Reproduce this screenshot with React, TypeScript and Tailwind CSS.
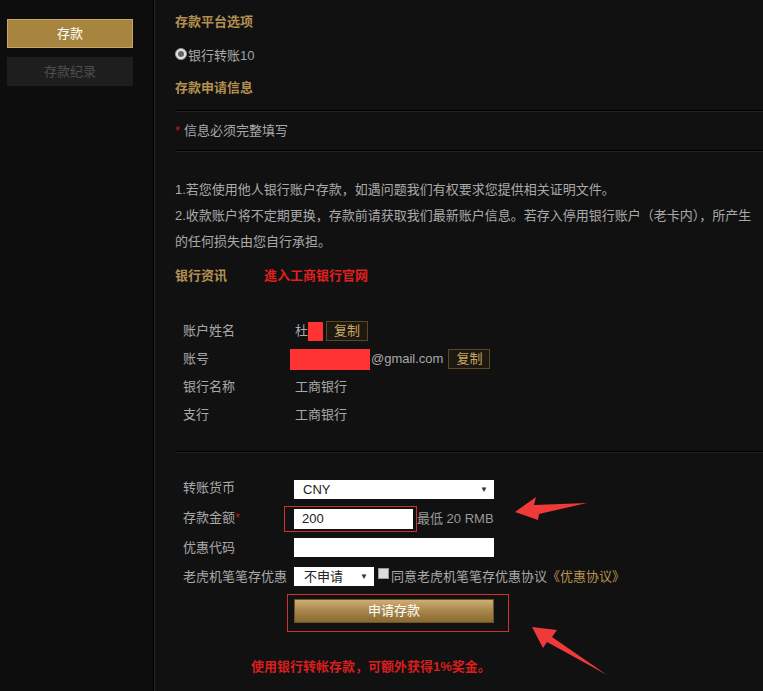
import React from "react";

function Divider() {
  return <div className="h-[2px] border-t border-black border-b border-b-[#232323]" />;
}

function CopyButton() {
  return (
    <span className="ml-[3px] inline-flex h-[20px] w-[42px] items-center justify-center border border-[#5a4828] bg-[#1e1910] text-[13px] text-[#c9a665]">
      复制
    </span>
  );
}

function Redacted({ w, h }: { w: number; h: number }) {
  return <span className="inline-block bg-[#ff3333]" style={{ width: w, height: h }} />;
}

function FakeSelect({ value, width, textPad }: { value: string; width: string; textPad: string }) {
  return (
    <div className={`flex h-[19px] items-center justify-between bg-white pr-[6px] text-[13px] text-[#222] ${width} ${textPad}`}>
      <span>{value}</span>
      <span className="text-[8px] text-[#333]">▼</span>
    </div>
  );
}

export default function App() {
  const bankRows = [
    { label: "账户姓名", value: <span className="flex items-center"><span>杜</span><Redacted w={15} h={19} /><CopyButton /></span> },
    { label: "账号", value: <span className="-ml-[5px] flex items-center"><Redacted w={80} h={21} /><span className="ml-[1px]">@gmail.com</span><span className="ml-[2px]"><CopyButton /></span></span> },
    { label: "银行名称", value: <span>工商银行</span> },
    { label: "支行", value: <span>工商银行</span> },
  ];

  return (
    <div className="relative flex h-[691px] overflow-hidden bg-[#111111] font-['Liberation_Sans','Noto_Sans_CJK_SC',sans-serif] text-[13px] text-[#a9a9a9]">
      {/* SIDEBAR */}
      <aside className="w-[154px] shrink-0 border-r border-black bg-[#0d0d0d] px-[7px] pt-[19px]">
        <div className="flex h-[29px] w-[126px] items-center justify-center border border-[#c6a668] bg-[#a8853f] text-[13px] text-white">
          存款
        </div>
        <div className="mt-[9px] flex h-[29px] w-[126px] items-center justify-center bg-[#1e1e1e] text-[13px] text-[#4e4e4e]">
          存款纪录
        </div>
      </aside>

      {/* MAIN */}
      <main className="flex-1 border-l border-[#262626] pl-[20px] pt-[12px]">
        <h2 className="h-[20px] leading-[20px] text-[13px] font-bold text-[#b38f50]">存款平台选项</h2>

        <div className="mt-[14px] flex h-[20px] items-center">
          <span className="flex h-[12px] w-[12px] -translate-y-[2px] items-center justify-center rounded-full border border-[#999] bg-[#e4e4e4]">
            <span className="h-[6px] w-[6px] rounded-full bg-[#666]" />
          </span>
          <span className="ml-[1px]">银行转账<span className="text-[#9aa4b0]">10</span></span>
        </div>

        <h2 className="mt-[12px] h-[20px] leading-[20px] text-[13px] font-bold text-[#b38f50]">存款申请信息</h2>

        <div className="mt-[12px]"><Divider /></div>
        <div className="flex h-[38px] items-center">
          <span className="text-[#c01818]">*</span>
          <span className="ml-[4px]">信息必须完整填写</span>
        </div>
        <Divider />

        {/* NOTES */}
        <div className="mt-[25px] leading-[26px]">
          <p>1.若您使用他人银行账户存款，如遇问题我们有权要求您提供相关证明文件。</p>
          <p>2.收款账户将不定期更换，存款前请获取我们最新账户信息。若存入停用银行账户（老卡内），所产生的任何损失由您自行承担。</p>
        </div>

        <div className="mt-[11px] flex h-[20px] items-center text-[13px] font-bold">
          <span className="w-[89px] text-[#b38f50]">银行资讯</span>
          <span className="text-[#e01f1f]">進入工商银行官网</span>
        </div>

        {/* BANK INFO */}
        <div className="mt-[31px] pl-[8px]">
          {bankRows.map((row) => (
            <div key={row.label} className="flex h-[28px] items-center">
              <span className="w-[112px] shrink-0">{row.label}</span>
              {row.value}
            </div>
          ))}
        </div>

        <div className="mt-[22px]"><Divider /></div>

        {/* FORM */}
        <div className="mt-[22px] pl-[8px]">
          <div className="flex h-[29px] items-center">
            <span className="w-[111px] shrink-0 -translate-y-[2px]">转账货币</span>
            <FakeSelect value="CNY" width="w-[200px]" textPad="pl-[9px]" />
          </div>
          <div className="flex h-[29px] items-center">
            <span className="w-[111px] shrink-0 -translate-y-[1px]">存款金额<span className="text-[#c01818]">*</span></span>
            <div className="relative">
              <input readOnly value="200" className="block h-[20px] w-[119px] bg-white pl-[8px] text-[13px] text-[#222] outline-none" />
              <div className="pointer-events-none absolute -left-[10px] -right-[4px] -top-[3px] -bottom-[3px] border border-[#d03030]" />
            </div>
            <span className="ml-[4px] text-[#9a9a9a]">最低 20 RMB</span>
          </div>
          <div className="flex h-[29px] items-center">
            <span className="w-[111px] shrink-0">优惠代码</span>
            <input readOnly value="" className="block h-[19px] w-[200px] bg-white outline-none" />
          </div>
          <div className="flex h-[29px] items-center">
            <span className="w-[111px] shrink-0">老虎机笔笔存优惠</span>
            <FakeSelect value="不申请" width="w-[80px]" textPad="pl-[10px]" />
            <span className="ml-[4px] h-[11px] w-[11px] -translate-y-[3px] border border-[#999] bg-[#dcdcdc]" />
            <span className="ml-[2px]">同意老虎机笔笔存优惠协议</span>
            <span className="text-[#b8924f]">《优惠协议》</span>
          </div>

          <div className="relative mt-[8px] ml-[111px] w-[200px]">
            <button className="flex h-[24px] w-[200px] items-center justify-center border border-[#6e5424] bg-gradient-to-b from-[#cfae74] via-[#a8854a] to-[#8a6a31] text-[13px] text-white">
              申请存款
            </button>
            <div className="pointer-events-none absolute -left-[7px] -right-[15px] -top-[5px] -bottom-[9px] border border-[#d03030]" />
          </div>
        </div>

        <p className="mt-[34px] pl-[76px] text-[13px] font-bold text-[#d81e1e]">
          使用银行转帐存款，可额外获得1%奖金。
        </p>
      </main>

      {/* ANNOTATION ARROWS */}
      <svg className="pointer-events-none absolute left-0 top-0" width="763" height="691">
        <polygon points="515,512 536,497 534,505 587,503 539,514 538,520" fill="#f03a3a" />
        <polygon points="532,627 557,630 552,637 607,675 547,642 543,648" fill="#f03a3a" />
      </svg>
    </div>
  );
}
